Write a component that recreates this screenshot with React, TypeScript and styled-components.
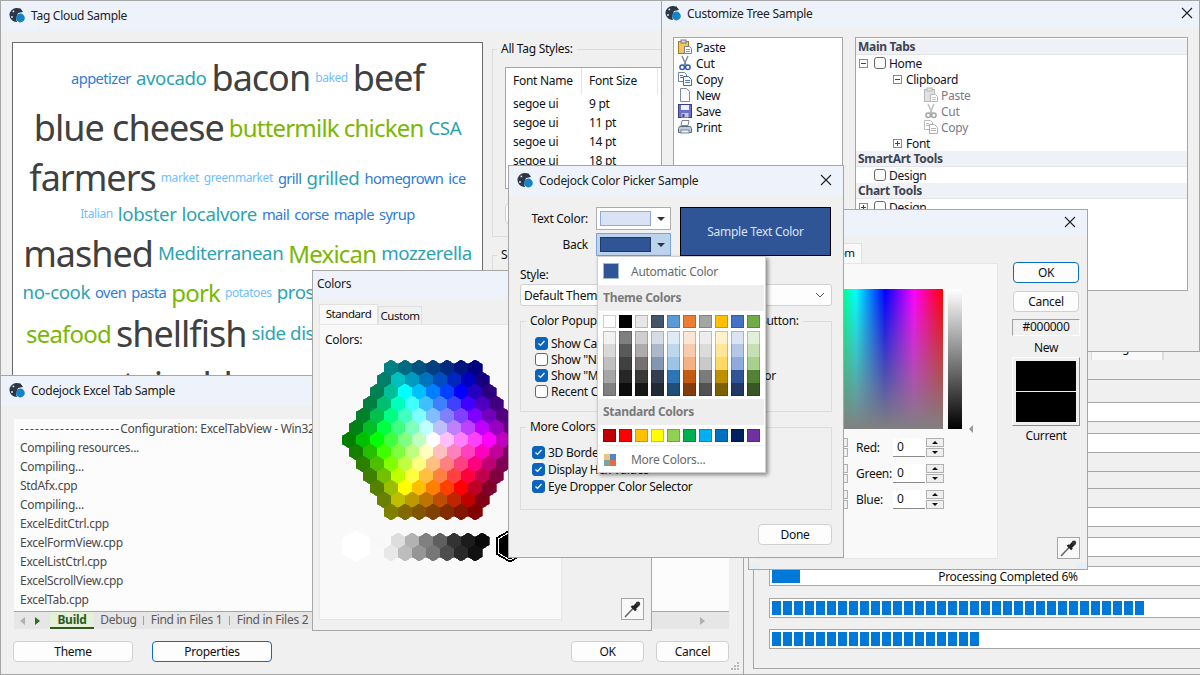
import React from 'react'
import styled, { createGlobalStyle } from 'styled-components'

const GlobalStyle = createGlobalStyle`
  html, body {
    margin: 0;
    padding: 0;
    background: #f0f0f0;
  }
  * {
    box-sizing: border-box;
  }
  #root {
    width: 1200px;
    height: 675px;
    overflow: hidden;
    font-family: "Noto Sans", "Open Sans", sans-serif;
    font-size: 12px;
    letter-spacing: -0.28px;
    color: #111;
  }
`

// desktop canvas, the dialogs are the free-floating windows on it
const Desktop = styled.div`
  position: relative;
  width: 1200px;
  height: 675px;
  overflow: hidden;
`

const Window = styled.section<{ $x: number; $y: number; $w: number; $h: number }>`
  position: absolute;
  left: ${(p) => p.$x}px;
  top: ${(p) => p.$y}px;
  width: ${(p) => p.$w}px;
  height: ${(p) => p.$h}px;
  display: flex;
  flex-direction: column;
  background: #f0f0f0;
  border: 1px solid #a6a6a6;
`

const TitleBar = styled.header<{ $h?: number; $inset?: number }>`
  flex: none;
  height: ${(p) => p.$h ?? 30}px;
  padding: 0 ${(p) => (p.$inset ?? 9) - 1}px 2px;
  display: flex;
  align-items: center;
  gap: 6px;
  background: #eef3fb;
`

const TitleText = styled.span`
  flex: 1;
  font-size: 12px;
  color: #222;
  white-space: nowrap;
`

const CloseGlyph = styled.svg`
  width: 12px;
  height: 12px;
  margin-right: 3px;
`

function Logo() {
  return (
    <svg width="16" height="16" viewBox="0 0 16 16">
      <path
        d="M7 1a7 7 0 1 0 1 14l-1-3 2-6 5-1a7 7 0 0 0-7-4z"
        fill="#2c3745"
      />
      <circle cx="4.4" cy="4.4" r="0.9" fill="#eef3fb" />
      <circle cx="3" cy="10" r="0.9" fill="#eef3fb" />
      <circle cx="11" cy="2.6" r="1.1" fill="#2c3745" />
      <circle cx="11.4" cy="11" r="4.4" fill="#1683c4" />
    </svg>
  )
}

function WindowTitle({ title, inset, close, h }: { title: string; inset?: number; close?: boolean; h?: number }) {
  return (
    <TitleBar $inset={inset} $h={h}>
      <Logo />
      <TitleText>{title}</TitleText>
      {close && <CloseIcon />}
    </TitleBar>
  )
}

function CloseIcon() {
  return (
    <CloseGlyph viewBox="0 0 12 12">
      <path d="M1 1l10 10M11 1L1 11" stroke="#222" strokeWidth="1.1" fill="none" />
    </CloseGlyph>
  )
}

const PushButton = styled.button<{ $w?: number; $primary?: boolean }>`
  flex: none;
  width: ${(p) => (p.$w ? `${p.$w}px` : 'auto')};
  height: 21px;
  padding: 0;
  font: inherit;
  letter-spacing: inherit;
  color: #111;
  background: #fdfdfd;
  border: 1px solid ${(p) => (p.$primary ? '#0a6cc4' : '#d0d0d0')};
  border-radius: 4px;
`

const Group = styled.fieldset`
  margin: 0;
  min-width: 0;
  padding: 0;
  border: 1px solid #dcdcdc;
`

const GroupTitle = styled.legend<{ $ml?: number }>`
  margin-left: ${(p) => p.$ml ?? 5}px;
  padding: 0 4px;
  height: 16px;
  line-height: 16px;
  white-space: nowrap;
`

const GroupRows = styled.div<{ $pad: string }>`
  padding: ${(p) => p.$pad};
`

/* ---------- tag cloud ---------- */

const TagBody = styled.div`
  flex: 1;
  display: flex;
  min-height: 0;
  padding: 11px 0 0 11px;
`

const CloudPanel = styled.div`
  flex: none;
  width: 471px;
  height: 380px;
  padding-top: 17px;
  background: #fff;
  border: 1px solid #6a6a6a;
  overflow: hidden;
`

const CloudLine = styled.div<{ $mt: number }>`
  display: flex;
  justify-content: center;
  align-items: center;
  gap: 5px;
  margin-top: ${(p) => p.$mt}px;
  white-space: nowrap;
`

const tagStyles = {
  1: { size: 12, color: '#70c0ff', track: -0.4 },
  2: { size: 14.67, color: '#2f7bd6', track: -0.55 },
  3: { size: 18.67, color: '#2ba3b2', track: -0.4 },
  4: { size: 24, color: '#7ab800', track: -0.8 },
  5: { size: 36, color: '#404040', track: -1 },
} as const

const Tag = styled.span<{ $level: keyof typeof tagStyles }>`
  font-size: ${(p) => tagStyles[p.$level].size}px;
  letter-spacing: ${(p) => tagStyles[p.$level].track}px;
  color: ${(p) => tagStyles[p.$level].color};
  line-height: 1;
`

type TagWord = [string, keyof typeof tagStyles]

const cloudLines: { mt: number; words: TagWord[] }[] = [
  { mt: 0, words: [['appetizer', 2], ['avocado', 3], ['bacon', 5], ['baked', 1], ['beef', 5]] },
  { mt: 14, words: [['blue cheese', 5], ['buttermilk', 4], ['chicken', 4], ['CSA', 3]] },
  { mt: 14, words: [['farmers', 5], ['market', 1], ['greenmarket', 1], ['grill', 2], ['grilled', 3], ['homegrown', 2], ['ice', 2]] },
  { mt: 9, words: [['Italian', 1], ['lobster', 3], ['localvore', 3], ['mail', 2], ['corse', 2], ['maple', 2], ['syrup', 2]] },
  { mt: 12, words: [['mashed', 5], ['Mediterranean', 3], ['Mexican', 4], ['mozzerella', 3]] },
  { mt: 9, words: [['no-cook', 3], ['oven', 2], ['pasta', 2], ['pork', 4], ['potatoes', 1], ['prosciutto', 3], ['pumpkins', 4]] },
  { mt: 11, words: [['seafood', 4], ['shellfish', 5], ['side dishes', 3], ['spinach', 3], ['soups', 3]] },
  { mt: 15, words: [['sustainable', 5], ['sweet', 3], ['tomatoes', 3], ['wine', 2]] },
]

const TagSide = styled.div`
  flex: 1;
  margin-left: 9px;
  display: flex;
  flex-direction: column;
  gap: 10px;
  margin-top: -1px;
`

const StylesGroup = styled(Group)<{ $h: number }>`
  flex: none;
  height: ${(p) => p.$h}px;
  padding: 10px 0 2px;
`

const StyleTable = styled.div`
  width: 240px;
  height: 122px;
  margin-left: 12px;
  display: grid;
  grid-template-columns: 76px 76px 1fr;
  grid-auto-rows: 19px;
  background: #fff;
  border: 1px solid #a6a6a6;
`

const StyleHead = styled.div`
  height: 26px;
  padding-left: 7px;
  line-height: 26px;
  color: #111;
  border-right: 1px solid #e6e6e6;
`

const StyleCell = styled.div`
  padding-left: 7px;
  line-height: 19px;
  color: #111;
  position: relative;
  top: 7px;
`

const SmallButton = styled(PushButton)`
  margin: 14px 0 0 12px;
  width: 120px;
`

const tagRows = [
  ['segoe ui', '9 pt'],
  ['segoe ui', '11 pt'],
  ['segoe ui', '14 pt'],
  ['segoe ui', '18 pt'],
  ['segoe ui', '24 pt'],
]

function TagCloudWindow() {
  return (
    <Window $x={0} $y={0} $w={700} $h={420}>
      <WindowTitle title="Tag Cloud Sample" />
      <TagBody>
        <CloudPanel>
          {cloudLines.map((line, i) => (
            <CloudLine key={i} $mt={line.mt}>
              {line.words.map(([word, level]) => (
                <Tag key={word} $level={level}>
                  {word}
                </Tag>
              ))}
            </CloudLine>
          ))}
        </CloudPanel>
        <TagSide>
          <StylesGroup $h={196}>
            <GroupTitle $ml={4}>All Tag Styles:</GroupTitle>
            <StyleTable>
              <StyleHead>Font Name</StyleHead>
              <StyleHead>Font Size</StyleHead>
              <span />
              {tagRows.map((row) => (
                <React.Fragment key={row[1]}>
                  <StyleCell>{row[0]}</StyleCell>
                  <StyleCell>{row[1]}</StyleCell>
                  <span />
                </React.Fragment>
              ))}
            </StyleTable>
            <SmallButton>Add</SmallButton>
          </StylesGroup>
          <StylesGroup $h={120}>
            <GroupTitle $ml={4}>Selected Style:</GroupTitle>
          </StylesGroup>
        </TagSide>
      </TagBody>
    </Window>
  )
}

/* ---------- progress window behind the tree ---------- */

const ProgressTabs = styled.div`
  flex: none;
  height: 29px;
  margin-top: 0;
  display: flex;
  align-items: flex-end;
  padding-left: 349px;
`

const ProgressTab = styled.div<{ $active?: boolean; $w: number }>`
  width: ${(p) => p.$w}px;
  height: 24px;
  line-height: 22px;
  text-align: center;
  background: ${(p) => (p.$active ? '#f9f9f9' : '#f0f0f0')};
  border: 1px solid #dcdcdc;
  border-bottom: 0;
`

const ProgressPage = styled.div`
  margin-left: 11px;
  width: 520px;
  flex: none;
  height: 309px;
  padding-left: 15px;
  display: flex;
  flex-direction: column;
  border: 1px solid #a6a6a6;
  border-top: 0;
`

const Rule = styled.div<{ $mt: number }>`
  flex: none;
  height: 1px;
  width: 478px;
  margin-top: ${(p) => p.$mt}px;
  background: #a6a6a6;
`

const ProgressBar = styled.div<{ $mt: number }>`
  position: relative;
  flex: none;
  width: 478px;
  height: 20px;
  margin-top: ${(p) => p.$mt}px;
  padding: 2px;
  background: #fff;
  border: 1px solid #a6a6a6;
`

const BarFill = styled.div`
  height: 14px;
  background: #0078d7;
`

const SegmentFill = styled.div<{ $count: number }>`
  height: 14px;
  width: ${(p) => p.$count * 11 - 2}px;
  background: repeating-linear-gradient(to right, #0078d7 0 9px, #fff 9px 11px);
`

const BarCaption = styled.span`
  position: absolute;
  inset: 0;
  text-align: center;
  line-height: 20px;
  color: #111;
`

function ProgressWindow() {
  return (
    <Window $x={741} $y={330} $w={480} $h={345}>
      <ProgressTabs>
        <ProgressTab $active $w={77}>Progress</ProgressTab>
        <ProgressTab $w={60}>Scroll Bar</ProgressTab>
      </ProgressTabs>
      <ProgressPage>
        <Rule $mt={19} />
        <ProgressBar $mt={22} />
        <ProgressBar $mt={11} />
        <Rule $mt={18} />
        <Rule $mt={16} />
        <ProgressBar $mt={18} />
        <ProgressBar $mt={10} />
        <ProgressBar $mt={9}>
          <BarFill style={{ width: 28 }} />
          <BarCaption>Processing Completed 6%</BarCaption>
        </ProgressBar>
        <ProgressBar $mt={12}>
          <SegmentFill $count={34} />
        </ProgressBar>
        <ProgressBar $mt={11}>
          <SegmentFill $count={19} />
        </ProgressBar>
      </ProgressPage>
    </Window>
  )
}

/* ---------- customize tree ---------- */

const TreeBody = styled.div`
  flex: 1;
  display: flex;
  gap: 12px;
  padding: 10px 11px 0 11px;
`

const CommandList = styled.div`
  flex: none;
  width: 170px;
  height: 254px;
  padding-top: 1px;
  background: #fff;
  border: 1px solid #a6a6a6;
`

const CommandRow = styled.div`
  height: 16px;
  padding-left: 3px;
  display: flex;
  align-items: center;
  gap: 3px;
  color: #10102a;
`

const TreePanel = styled.div`
  flex: none;
  width: 333px;
  height: 254px;
  padding-top: 1px;
  background: #fff;
  border: 1px solid #a6a6a6;
`

const TreeHeader = styled.div`
  height: 16px;
  padding-left: 2px;
  line-height: 15px;
  font-weight: 700;
  color: #3d4450;
  background: #f0f1f6;
  border-bottom: 1px solid #e2e4ea;
`

const TreeRow = styled.div<{ $indent: number; $muted?: boolean; $gap?: number }>`
  height: 16px;
  padding-left: ${(p) => p.$indent}px;
  display: flex;
  align-items: center;
  gap: ${(p) => p.$gap ?? 4}px;
  color: ${(p) => (p.$muted ? '#7a7a88' : '#10102a')};
`

const Expander = styled.span<{ $open?: boolean }>`
  position: relative;
  flex: none;
  width: 9px;
  height: 9px;
  margin-right: 2px;
  background: #fff;
  border: 1px solid #8a8a8a;
  &::before {
    content: '';
    position: absolute;
    left: 1px;
    top: 3px;
    width: 5px;
    height: 1px;
    background: #30486a;
  }
  &::after {
    content: '';
    display: ${(p) => (p.$open ? 'none' : 'block')};
    position: absolute;
    left: 3px;
    top: 1px;
    width: 1px;
    height: 5px;
    background: #30486a;
  }
`

const TreeCheck = styled.span`
  flex: none;
  width: 12px;
  height: 12px;
  margin-right: -1px;
  background: #fff;
  border: 1px solid #666;
  border-radius: 3px;
`

const GlyphBox = styled.svg<{ $muted?: boolean }>`
  flex: none;
  width: 16px;
  height: 16px;
  filter: ${(p) => (p.$muted ? 'grayscale(1) opacity(0.55)' : 'none')};
`

type GlyphName = 'paste' | 'cut' | 'copy' | 'new' | 'save' | 'print'

function Glyph({ name, muted }: { name: GlyphName; muted?: boolean }) {
  return (
    <GlyphBox viewBox="0 0 16 16" $muted={muted}>
      {name === 'paste' && (
        <>
          <rect x="1.5" y="2.5" width="10" height="12" fill="#f3c75b" stroke="#a57a22" />
          <rect x="4" y="1" width="5" height="3" fill="#d9d9d9" stroke="#7a7a7a" />
          <path d="M7.5 7.5h5l2 2v5h-7z" fill="#fff" stroke="#6f7f9a" />
          <path d="M9 10.5h4M9 12.5h4" stroke="#8a9ab8" />
        </>
      )}
      {name === 'cut' && (
        <>
          <path d="M5 1l4 9M11 1L7 10" stroke="#7b8794" strokeWidth="1.4" fill="none" />
          <circle cx="5.2" cy="12.3" r="2.3" fill="none" stroke="#2f5ea8" strokeWidth="1.5" />
          <circle cx="10.8" cy="12.3" r="2.3" fill="none" stroke="#2f5ea8" strokeWidth="1.5" />
        </>
      )}
      {name === 'copy' && (
        <>
          <path d="M1.5 1.5h6l2 2v7h-8z" fill="#fff" stroke="#6f86a8" />
          <path d="M6.5 5.5h5l3 3v6h-8z" fill="#fff" stroke="#3f6cb0" />
          <path d="M3 4.5h3M3 6.5h3M8 9.5h5M8 11.5h5" stroke="#4f7cc0" />
        </>
      )}
      {name === 'new' && (
        <path d="M3.5 1.5h6l3 3v10h-9z" fill="#fbfbff" stroke="#7d8aa0" />
      )}
      {name === 'save' && (
        <>
          <rect x="1.5" y="1.5" width="13" height="13" fill="#6a6fd0" stroke="#3a3e86" />
          <rect x="4" y="2" width="8" height="5" fill="#eef0ff" />
          <rect x="4.5" y="10" width="7" height="4.5" fill="#c8c8d8" />
          <rect x="5.5" y="11" width="2" height="3" fill="#3a3e86" />
        </>
      )}
      {name === 'print' && (
        <>
          <path d="M5 1.5h7l-1 5H4z" fill="#fff" stroke="#7a8796" />
          <path d="M2.5 7.5h11l1 2v4h-13v-4z" fill="#c4ccd6" stroke="#5d6a7a" />
          <rect x="4" y="11" width="8" height="3" fill="#eef1f5" stroke="#7a8796" />
        </>
      )}
    </GlyphBox>
  )
}

const commands: [GlyphName, string][] = [
  ['paste', 'Paste'],
  ['cut', 'Cut'],
  ['copy', 'Copy'],
  ['new', 'New'],
  ['save', 'Save'],
  ['print', 'Print'],
]

function TreeWindow() {
  return (
    <Window $x={661} $y={0} $w={539} $h={352}>
      <WindowTitle title="Customize Tree Sample" inset={4} close h={26} />
      <TreeBody>
        <CommandList>
          {commands.map(([icon, label]) => (
            <CommandRow key={label}>
              <Glyph name={icon} />
              {label}
            </CommandRow>
          ))}
        </CommandList>
        <TreePanel>
          <TreeHeader>Main Tabs</TreeHeader>
          <TreeRow $indent={3}>
            <Expander $open />
            <TreeCheck />
            Home
          </TreeRow>
          <TreeRow $indent={37} $gap={2}>
            <Expander $open />
            Clipboard
          </TreeRow>
          {commands.slice(0, 3).map(([icon, label]) => (
            <TreeRow key={label} $indent={67} $muted $gap={2}>
              <Glyph name={icon} muted />
              {label}
            </TreeRow>
          ))}
          <TreeRow $indent={37} $gap={2}>
            <Expander />
            Font
          </TreeRow>
          <TreeHeader>SmartArt Tools</TreeHeader>
          <TreeRow $indent={18}>
            <TreeCheck />
            Design
          </TreeRow>
          <TreeHeader>Chart Tools</TreeHeader>
          <TreeRow $indent={3}>
            <Expander />
            <TreeCheck />
            Design
          </TreeRow>
        </TreePanel>
      </TreeBody>
    </Window>
  )
}

/* ---------- excel tab sample ---------- */

const ExcelBody = styled.div`
  flex: 1;
  display: flex;
  flex-direction: column;
  padding: 13px 14px 0 12px;
  min-height: 0;
`

const OutputList = styled.div`
  flex: none;
  height: 192px;
  margin-left: 1px;
  padding: 0 6px;
  background: #fcfcfc;
  overflow: hidden;
`

const OutputLine = styled.div`
  height: 19px;
  line-height: 19px;
  color: #4a4a4a;
  white-space: nowrap;
`

const Dashes = styled.span`
  letter-spacing: 1.15px;
`

const SheetTabs = styled.div`
  flex: none;
  height: 18px;
  margin-left: 1px;
  display: flex;
  align-items: stretch;
  color: #5a5a5a;
  background: #e6e6e6;
  border-top: 1px solid #a6a6a6;
`

const SheetArrow = styled.span<{ $dir: 'left' | 'right'; $color: string; $ml: number }>`
  flex: none;
  align-self: center;
  margin-left: ${(p) => p.$ml}px;
  width: 0;
  height: 0;
  border-top: 4px solid transparent;
  border-bottom: 4px solid transparent;
  ${(p) =>
    p.$dir === 'left'
      ? `border-right: 5px solid ${p.$color};`
      : `border-left: 5px solid ${p.$color};`}
`

const SheetTab = styled.span<{ $active?: boolean; $w: number; $ml?: number }>`
  flex: none;
  width: ${(p) => p.$w}px;
  margin-left: ${(p) => p.$ml ?? 0}px;
  line-height: 15px;
  text-align: center;
  font-weight: ${(p) => (p.$active ? 700 : 400)};
  color: ${(p) => (p.$active ? '#2f5a1e' : 'inherit')};
  background: ${(p) => (p.$active ? '#e4f0d8' : 'transparent')};
  border-bottom: ${(p) => (p.$active ? '2px solid #2f5a1e' : '0')};
`

const SheetDivider = styled.span`
  flex: none;
  align-self: center;
  width: 1px;
  height: 9px;
  background: #a0a0a0;
`

const ExcelFooter = styled.div`
  flex: none;
  margin-top: 12px;
  display: flex;
  gap: 12px;
`

const FooterGap = styled.span`
  flex: 1;
`

const PropertiesButton = styled(PushButton)`
  margin-left: 7px;
`

const ResizeGrip = styled.svg`
  position: absolute;
  right: 3px;
  bottom: 3px;
  width: 9px;
  height: 9px;
`

const outputLines = [
  'Compiling resources...',
  'Compiling...',
  'StdAfx.cpp',
  'Compiling...',
  'ExcelEditCtrl.cpp',
  'ExcelFormView.cpp',
  'ExcelListCtrl.cpp',
  'ExcelScrollView.cpp',
  'ExcelTab.cpp',
]

function ExcelWindow() {
  return (
    <Window $x={0} $y={375} $w={744} $h={300}>
      <WindowTitle title="Codejock Excel Tab Sample" />
      <ExcelBody>
        <OutputList>
          <OutputLine>
            <Dashes>--------------------</Dashes>Configuration: ExcelTabView - Win32 Debug
          </OutputLine>
          {outputLines.map((line, i) => (
            <OutputLine key={i}>{line}</OutputLine>
          ))}
        </OutputList>
        <SheetTabs>
          <SheetArrow $dir="left" $color="#b0b0b0" $ml={6} />
          <SheetArrow $dir="right" $color="#2f6a2a" $ml={10} />
          <SheetTab $active $w={44} $ml={10}>Build</SheetTab>
          <SheetTab $w={49}>Debug</SheetTab>
          <SheetDivider />
          <SheetTab $w={85}>Find in Files 1</SheetTab>
          <SheetDivider />
          <SheetTab $w={85}>Find in Files 2</SheetTab>
          <FooterGap />
          <SheetArrow $dir="right" $color="#b0b0b0" $ml={0} />
          <SheetTab $w={24} />
        </SheetTabs>
        <ExcelFooter>
          <PushButton $w={120}>Theme</PushButton>
          <PropertiesButton $w={120} $primary>Properties</PropertiesButton>
          <FooterGap />
          <PushButton $w={73}>OK</PushButton>
          <PushButton $w={73}>Cancel</PushButton>
        </ExcelFooter>
      </ExcelBody>
      <ResizeGrip viewBox="0 0 9 9">
        <path d="M6 0h2v2H6zM3 3h2v2H3zM6 3h2v2H6zM0 6h2v2H0zM3 6h2v2H3zM6 6h2v2H6z" fill="#b8b8b8" />
      </ResizeGrip>
    </Window>
  )
}

/* ---------- colors dialog, both tabs ---------- */

const ColorsTitle = styled(TitleBar)`
  padding-left: 4px;
`

const ColorsBody = styled.div`
  flex: 1;
  display: flex;
  padding: 0 0 10px 6px;
  min-height: 0;
`

const TabColumn = styled.div`
  flex: none;
  width: 243px;
  padding-top: 7px;
  display: flex;
  flex-direction: column;
`

const TabStrip = styled.div`
  flex: none;
  height: 20px;
  display: flex;
  align-items: flex-end;
`

const DialogTab = styled.div<{ $active?: boolean; $w: number }>`
  flex: none;
  width: ${(p) => p.$w}px;
  height: ${(p) => (p.$active ? 20 : 18)}px;
  line-height: 17px;
  text-align: center;
  font-size: 11.5px;
  letter-spacing: -0.45px;
  background: ${(p) => (p.$active ? '#f9f9f9' : '#f0f0f0')};
  border: 1px solid #e0e0e0;
  border-bottom: 0;
`

const TabPage = styled.div`
  flex: 1;
  min-height: 0;
  background: #f9f9f9;
  border: 1px solid #e6e6e6;
  overflow: hidden;
`

const PageLabel = styled.div`
  height: 18px;
  margin: 6px 0 0 5px;
  line-height: 18px;
`

const HexChart = styled.svg`
  display: block;
  margin: 4px 0 0 18px;
`

const SideColumn = styled.div`
  flex: none;
  width: 68px;
  margin-left: 14px;
  padding-top: 26px;
  display: flex;
  flex-direction: column;
  align-items: stretch;
  text-align: center;
`

const SideButton = styled(PushButton)<{ $mb: number }>`
  margin: 0 1px ${(p) => p.$mb}px 1px;
`

const HexValue = styled.div`
  height: 17px;
  line-height: 14px;
  background: #f0f0f0;
  border: 1px solid;
  border-color: #a0a0a0 #fff #fff #a0a0a0;
`

const SideCaption = styled.div<{ $mt: number }>`
  height: 17px;
  margin-top: ${(p) => p.$mt}px;
  line-height: 15px;
`

const PreviewWell = styled.div`
  height: 69px;
  padding: 3px;
  display: flex;
  flex-direction: column;
  gap: 1px;
  border: 1px solid;
  border-color: #fff #8a8a8a #8a8a8a #fff;
`

const PreviewSwatch = styled.div`
  flex: 1;
  background: #000;
`

const DropperButton = styled.div`
  margin-top: auto;
  align-self: flex-end;
  width: 23px;
  height: 22px;
  display: flex;
  align-items: center;
  justify-content: center;
  background: #f8f8f8;
  border: 1px solid #a6a6a6;
`

const SpectrumRow = styled.div`
  margin-top: 1px;
  padding-left: 13px;
  display: flex;
  align-items: flex-end;
  gap: 5px;
`

const Spectrum = styled.div`
  width: 174px;
  height: 140px;
  background:
    linear-gradient(to bottom, rgba(128, 128, 128, 0), #808080),
    linear-gradient(to right, #f00, #ff0, #0f0, #0ff, #00f, #f0f, #f00);
`

const LuminanceBar = styled.div`
  width: 14px;
  height: 140px;
  background: linear-gradient(#fff, #000);
`

const LuminanceMark = styled.span`
  width: 0;
  height: 0;
  margin-left: 2px;
  margin-bottom: -4px;
  border-top: 4px solid transparent;
  border-bottom: 4px solid transparent;
  border-right: 4px solid #999;
`

const SpinGrid = styled.div`
  margin: 9px 0 0 13px;
  display: grid;
  grid-template-columns: 78px 87px;
  column-gap: 9px;
  row-gap: 7px;
`

const SpinField = styled.div`
  height: 19px;
  display: flex;
  align-items: center;
`

const SpinLabel = styled.span<{ $w: number }>`
  flex: none;
  width: ${(p) => p.$w}px;
`

const SpinInput = styled.span`
  flex: none;
  width: 32px;
  height: 19px;
  padding-left: 4px;
  line-height: 17px;
  background: #fff;
  border-bottom: 1px solid #8a8a8a;
`

const SpinButtons = styled.span`
  flex: none;
  width: 18px;
  margin-left: 1px;
  height: 19px;
  display: flex;
  flex-direction: column;
  gap: 1px;
`

const SpinButton = styled.span<{ $down?: boolean }>`
  flex: 1;
  display: flex;
  align-items: center;
  justify-content: center;
  background: #efefef;
  border: 1px solid #b0b0b0;
  &::before {
    content: '';
    width: 0;
    height: 0;
    border-left: 3px solid transparent;
    border-right: 3px solid transparent;
    ${(p) => (p.$down ? 'border-top: 3px solid #111;' : 'border-bottom: 3px solid #111;')}
  }
`

const CornerTint = styled.span<{ $side: 'left' | 'right' }>`
  position: absolute;
  bottom: 0;
  ${(p) => p.$side}: 0;
  width: 11px;
  height: 6px;
  background: #e8eef8;
`

type RGB = [number, number, number]

// corners of the colour hexagon in axial coordinates, walking around the wheel
const hexCorners: { q: number; r: number; c: RGB }[] = [
  { q: -1, r: 0, c: [0, 255, 0] },
  { q: 0, r: -1, c: [0, 255, 255] },
  { q: 1, r: -1, c: [0, 0, 255] },
  { q: 1, r: 0, c: [255, 0, 255] },
  { q: 0, r: 1, c: [255, 0, 0] },
  { q: -1, r: 1, c: [255, 255, 0] },
]

function hexColor(q: number, r: number): string {
  const ring = Math.max(Math.abs(q), Math.abs(r), Math.abs(-q - r))
  if (ring === 0) return '#ffffff'
  let base: RGB = [0, 0, 0]
  for (let i = 0; i < 6; i++) {
    const a = hexCorners[i]
    const b = hexCorners[(i + 1) % 6]
    const det = a.q * b.r - a.r * b.q
    const u = (q * b.r - r * b.q) / det
    const v = (a.q * r - a.r * q) / det
    if (u >= -0.001 && v >= -0.001) {
      const t = v / (u + v)
      base = [0, 1, 2].map((k) => a.c[k] + (b.c[k] - a.c[k]) * t) as RGB
      break
    }
  }
  const rgb = base.map((v) => {
    if (ring >= 4) return v * (1 - (ring - 4) * 0.25)
    const mix = 1 - ring / 4
    return v + (255 - v) * mix
  })
  return `rgb(${rgb.map((v) => Math.round(v)).join(',')})`
}

function hexPoints(cx: number, cy: number, w = 7, h = 8) {
  return [
    [cx, cy - h],
    [cx + w, cy - h / 2],
    [cx + w, cy + h / 2],
    [cx, cy + h],
    [cx - w, cy + h / 2],
    [cx - w, cy - h / 2],
  ]
    .map((p) => p.join(','))
    .join(' ')
}

const grayTop = ['#f8f8f8', '#dddddd', '#b2b2b2', '#808080', '#5f5f5f', '#333333', '#1c1c1c', '#0a0a0a']
const grayBottom = ['#e8e8e8', '#bdbdbd', '#969696', '#777777', '#4d4d4d', '#292929', '#111111']

function HexPicker() {
  const cx = 95
  const cy = 87
  const cells: React.ReactNode[] = []
  for (let r = -6; r <= 6; r++) {
    const n = 13 - Math.abs(r)
    for (let i = 0; i < n; i++) {
      const col = i - (n - 1) / 2
      const q = col - r / 2
      const fill = hexColor(q, r)
      cells.push(
        <polygon
          key={`${r}-${i}`}
          points={hexPoints(cx + col * 14, cy + r * 12)}
          fill={fill}
          stroke={fill}
          strokeWidth="0.7"
        />
      )
    }
  }
  return (
    <HexChart width="205" height="225" viewBox="0 0 205 225" shapeRendering="crispEdges">
      {cells}
      <polygon points={hexPoints(18, 193, 14, 16)} fill="#fff" />
      {grayTop.map((c, i) => (
        <polygon key={c} points={hexPoints(39 + (i === 0 ? 0 : i * 14 + 7), 188)} fill={c} stroke={c} strokeWidth="0.7" />
      ))}
      {grayBottom.map((c, i) => (
        <polygon key={c} points={hexPoints(53 + i * 14, 200)} fill={c} stroke={c} strokeWidth="0.7" />
      ))}
      <polygon points={hexPoints(172, 193, 14, 16)} fill="#000" stroke="#000" />
      <polygon points={hexPoints(172, 193, 12, 14)} fill="#000" stroke="#fff" />
    </HexChart>
  )
}

function SpinBox({ label, width }: { label: string; width: number }) {
  return (
    <SpinField>
      <SpinLabel $w={width}>{label}</SpinLabel>
      <SpinInput>0</SpinInput>
      <SpinButtons>
        <SpinButton />
        <SpinButton $down />
      </SpinButtons>
    </SpinField>
  )
}

function Dropper() {
  return (
    <svg width="19" height="19" viewBox="0 0 19 19">
      <path d="M2 17l8.5-9" stroke="#666" strokeWidth="1.6" fill="none" />
      <path d="M8.5 6l4.5 4.5" stroke="#222" strokeWidth="2.4" fill="none" />
      <path d="M11 8l4-4" stroke="#222" strokeWidth="4" fill="none" />
      <circle cx="15" cy="3.8" r="2.2" fill="#333" />
    </svg>
  )
}

function ColorsWindow({ x, y, custom }: { x: number; y: number; custom?: boolean }) {
  return (
    <Window $x={x} $y={y} $w={340} $h={361}>
      <ColorsTitle $h={26}>
        <TitleText>Colors</TitleText>
        <CloseIcon />
      </ColorsTitle>
      <ColorsBody>
        <TabColumn>
          <TabStrip>
            <DialogTab $active={!custom} $w={custom ? 53 : 59}>Standard</DialogTab>
            <DialogTab $active={custom} $w={custom ? 54 : 44}>Custom</DialogTab>
          </TabStrip>
          <TabPage>
            <PageLabel>Colors:</PageLabel>
            {custom ? (
              <>
                <SpectrumRow>
                  <Spectrum />
                  <LuminanceBar />
                  <LuminanceMark />
                </SpectrumRow>
                <SpinGrid>
                  <SpinBox label="Hue:" width={28} />
                  <SpinBox label="Red:" width={37} />
                  <SpinBox label="Sat:" width={28} />
                  <SpinBox label="Green:" width={37} />
                  <SpinBox label="Lum:" width={28} />
                  <SpinBox label="Blue:" width={37} />
                </SpinGrid>
              </>
            ) : (
              <HexPicker />
            )}
          </TabPage>
        </TabColumn>
        <SideColumn>
          <SideButton $primary $mb={8}>OK</SideButton>
          <SideButton $mb={7}>Cancel</SideButton>
          <HexValue>#000000</HexValue>
          <SideCaption $mt={4}>New</SideCaption>
          <PreviewWell>
            <PreviewSwatch />
            <PreviewSwatch />
          </PreviewWell>
          <SideCaption $mt={2}>Current</SideCaption>
          <DropperButton>
            <Dropper />
          </DropperButton>
        </SideColumn>
      </ColorsBody>
      {custom && (
        <>
          <CornerTint $side="left" />
          <CornerTint $side="right" />
        </>
      )}
    </Window>
  )
}

/* ---------- color picker sample ---------- */

const PickerBody = styled.div`
  position: relative;
  flex: 1;
  padding: 11px 10px 0 11px;
  display: flex;
  flex-direction: column;
  min-height: 0;
`

const TopGrid = styled.div`
  flex: none;
  display: grid;
  grid-template-columns: 68px 75px 152px;
  grid-template-rows: 23px 23px;
  column-gap: 8px;
  row-gap: 3px;
`

const ComboLabel = styled.label`
  line-height: 24px;
  text-align: right;
`

const SwatchCombo = styled.div<{ $active?: boolean }>`
  height: 23px;
  padding: 3px 3px 3px 3px;
  display: flex;
  align-items: stretch;
  background: ${(p) => (p.$active ? '#bcd3ee' : '#fff')};
  border: 1px solid ${(p) => (p.$active ? '#7ba3d8' : '#adadad')};
`

const ComboColor = styled.span<{ $fill: string; $edge: string }>`
  flex: none;
  width: 51px;
  background: ${(p) => p.$fill};
  border: 1px solid ${(p) => p.$edge};
`

const ComboArrow = styled.span`
  align-self: center;
  margin-left: 6px;
  width: 0;
  height: 0;
  border-left: 4px solid transparent;
  border-right: 4px solid transparent;
  border-top: 4px solid #333;
`

const SampleBox = styled.div`
  grid-column: 3;
  grid-row: 1 / span 2;
  margin-left: 1px;
  display: flex;
  align-items: center;
  justify-content: center;
  color: #dae3f3;
  background: #2f5597;
  border: 1px solid #000;
`

const StyleLabel = styled.div`
  flex: none;
  height: 17px;
  margin-top: 11px;
  line-height: 16px;
`

const StyleSelect = styled.div`
  flex: none;
  width: 312px;
  height: 22px;
  padding: 0 6px 0 3px;
  display: flex;
  align-items: center;
  justify-content: space-between;
  background: #fdfdfd;
  border: 1px solid #d0d0d0;
  border-radius: 3px;
`

const OptionsGroup = styled(Group)<{ $mt: number }>`
  flex: none;
  width: 312px;
  margin-top: ${(p) => p.$mt}px;
`

const CheckRow = styled.div<{ $h: number }>`
  height: ${(p) => p.$h}px;
  display: flex;
  align-items: center;
  gap: 3px;
  white-space: nowrap;
`

const CheckBox = styled.span<{ $on?: boolean }>`
  flex: none;
  width: 13px;
  height: 13px;
  display: flex;
  align-items: center;
  justify-content: center;
  background: ${(p) => (p.$on ? '#0a63bd' : '#fff')};
  border: 1px solid ${(p) => (p.$on ? '#0a63bd' : '#666')};
  border-radius: 3px;
`

const DoneRow = styled.div`
  flex: none;
  margin-top: 14px;
  display: flex;
  justify-content: flex-end;
  padding-right: 1px;
`

const ColorPopup = styled.div`
  position: absolute;
  left: 88px;
  top: 60px;
  width: 169px;
  height: 217px;
  background: #fff;
  border: 1px solid #d0d0d0;
  box-shadow: 2px 2px 4px rgba(0, 0, 0, 0.45);
`

const PopupRow = styled.div<{ $h: number }>`
  height: ${(p) => p.$h}px;
  padding-left: 5px;
  display: flex;
  align-items: center;
  color: #6a6a6a;
`

const PopupSwatch = styled.span`
  flex: none;
  width: 16px;
  height: 16px;
  margin-right: 12px;
  background: #2f5597;
  border: 1px solid #9fb8d8;
`

const MosaicIcon = styled.svg`
  flex: none;
  width: 14px;
  height: 14px;
  margin-right: 14px;
`

const PopupHeader = styled.div`
  height: 26px;
  margin: 0 1px 0 0;
  padding-left: 5px;
  line-height: 25px;
  font-weight: 700;
  color: #7a7a7a;
  background: #eeeeee;
`

const SwatchGrid = styled.div<{ $mt: number; $mb: number }>`
  display: grid;
  grid-template-columns: repeat(10, 13px);
  column-gap: 3px;
  margin: ${(p) => p.$mt}px 0 ${(p) => p.$mb}px 5px;
`

const Swatch = styled.span<{ $fill: string }>`
  height: 13px;
  background: ${(p) => p.$fill};
  box-shadow: inset 0 0 0 1px rgba(0, 0, 0, 0.2);
`

const ShadeColumn = styled.span`
  position: relative;
  display: flex;
  flex-direction: column;
  &::after {
    content: '';
    position: absolute;
    inset: 0;
    box-shadow: inset 0 0 0 1px rgba(0, 0, 0, 0.2);
  }
`

const Shade = styled.span<{ $fill: string }>`
  height: 13px;
  background: ${(p) => p.$fill};
`

const PopupDivider = styled.div`
  height: 1px;
  margin-right: 1px;
  background: #eeeeee;
`

const themeColors = ['#ffffff', '#000000', '#e7e6e6', '#44546a', '#5b9bd5', '#ed7d31', '#a5a5a5', '#ffc000', '#4472c4', '#70ad47']
const themeShades = [
  ['#f2f2f2', '#d9d9d9', '#bfbfbf', '#a6a6a6', '#808080'],
  ['#7f7f7f', '#595959', '#404040', '#262626', '#0d0d0d'],
  ['#d0cece', '#afabab', '#767171', '#3b3838', '#181717'],
  ['#d6dce5', '#adb9ca', '#8497b0', '#333f50', '#222a35'],
  ['#deebf7', '#bdd7ee', '#9dc3e6', '#2e75b6', '#1f4e79'],
  ['#fbe5d6', '#f8cbad', '#f4b183', '#c55a11', '#843c0c'],
  ['#ededed', '#dbdbdb', '#c9c9c9', '#7b7b7b', '#525252'],
  ['#fff2cc', '#ffe699', '#ffd966', '#bf9000', '#7f6000'],
  ['#dae3f3', '#b4c7e7', '#8faadc', '#2f5597', '#1f3864'],
  ['#e2f0d9', '#c6e0b4', '#a9d18e', '#548235', '#385723'],
]
const standardColors = ['#c00000', '#ff0000', '#ffc000', '#ffff00', '#92d050', '#00b050', '#00b0f0', '#0070c0', '#002060', '#7030a0']

function Check({ on, label, h }: { on?: boolean; label: string; h: number }) {
  return (
    <CheckRow $h={h}>
      <CheckBox $on={on}>
        {on && (
          <svg width="9" height="9" viewBox="0 0 9 9">
            <path d="M1.5 4.5l2 2 4-4.5" stroke="#fff" strokeWidth="1.2" fill="none" />
          </svg>
        )}
      </CheckBox>
      {label}
    </CheckRow>
  )
}

function PickerPopup() {
  return (
    <ColorPopup>
      <PopupRow $h={28}>
        <PopupSwatch />
        Automatic Color
      </PopupRow>
      <PopupHeader>Theme Colors</PopupHeader>
      <SwatchGrid $mt={4} $mb={3}>
        {themeColors.map((c) => (
          <Swatch key={c} $fill={c} />
        ))}
      </SwatchGrid>
      <SwatchGrid $mt={0} $mb={3}>
        {themeShades.map((col) => (
          <ShadeColumn key={col[0]}>
            {col.map((c) => (
              <Shade key={c} $fill={c} />
            ))}
          </ShadeColumn>
        ))}
      </SwatchGrid>
      <PopupHeader>Standard Colors</PopupHeader>
      <SwatchGrid $mt={4} $mb={3}>
        {standardColors.map((c) => (
          <Swatch key={c} $fill={c} />
        ))}
      </SwatchGrid>
      <PopupDivider />
      <PopupRow $h={27}>
        <MosaicIcon viewBox="0 0 14 14" shapeRendering="crispEdges">
          <rect x="1" y="1" width="6" height="6" fill="#eec27f" />
          <rect x="7" y="1" width="6" height="6" fill="#4f88c6" />
          <rect x="1" y="7" width="6" height="6" fill="#78a898" />
          <rect x="7" y="7" width="6" height="6" fill="#e2694a" />
        </MosaicIcon>
        More Colors...
      </PopupRow>
    </ColorPopup>
  )
}

function PickerWindow() {
  return (
    <Window $x={508} $y={165} $w={336} $h={393}>
      <WindowTitle title="Codejock Color Picker Sample" close />
      <PickerBody>
        <TopGrid>
          <ComboLabel>Text Color:</ComboLabel>
          <SwatchCombo>
            <ComboColor $fill="#dae3f3" $edge="#8faadc" />
            <ComboArrow />
          </SwatchCombo>
          <SampleBox>Sample Text Color</SampleBox>
          <ComboLabel>Back</ComboLabel>
          <SwatchCombo $active>
            <ComboColor $fill="#2f5597" $edge="#1f3864" />
            <ComboArrow />
          </SwatchCombo>
        </TopGrid>
        <StyleLabel>Style:</StyleLabel>
        <StyleSelect>
          Default Theme
          <svg width="10" height="6" viewBox="0 0 10 6">
            <path d="M1 1l4 4 4-4" stroke="#555" fill="none" />
          </svg>
        </StyleSelect>
        <OptionsGroup $mt={7}>
          <GroupTitle>Color Popup Options for Dropdown Picker Button:</GroupTitle>
          <GroupRows $pad="6px 12px 12px 14px">
            <Check on label="Show Caption" h={16} />
            <Check label={'Show "None" Color Selector'} h={16} />
            <Check on label={'Show "More Colors" Color Palette Selector'} h={16} />
            <Check label="Recent Colors" h={16} />
          </GroupRows>
        </OptionsGroup>
        <OptionsGroup $mt={7}>
          <GroupTitle>More Colors</GroupTitle>
          <GroupRows $pad="9px 12px 14px 11px">
            <Check on label="3D Border" h={17} />
            <Check on label="Display Hex Values" h={17} />
            <Check on label="Eye Dropper Color Selector" h={17} />
          </GroupRows>
        </OptionsGroup>
        <DoneRow>
          <PushButton $w={74}>Done</PushButton>
        </DoneRow>
        <PickerPopup />
      </PickerBody>
    </Window>
  )
}

export default function App() {
  return (
    <>
      <GlobalStyle />
      <Desktop>
        <TagCloudWindow />
        <ProgressWindow />
        <TreeWindow />
        <ExcelWindow />
        <ColorsWindow x={748} y={209} custom />
        <ColorsWindow x={312} y={270} />
        <PickerWindow />
      </Desktop>
    </>
  )
}
